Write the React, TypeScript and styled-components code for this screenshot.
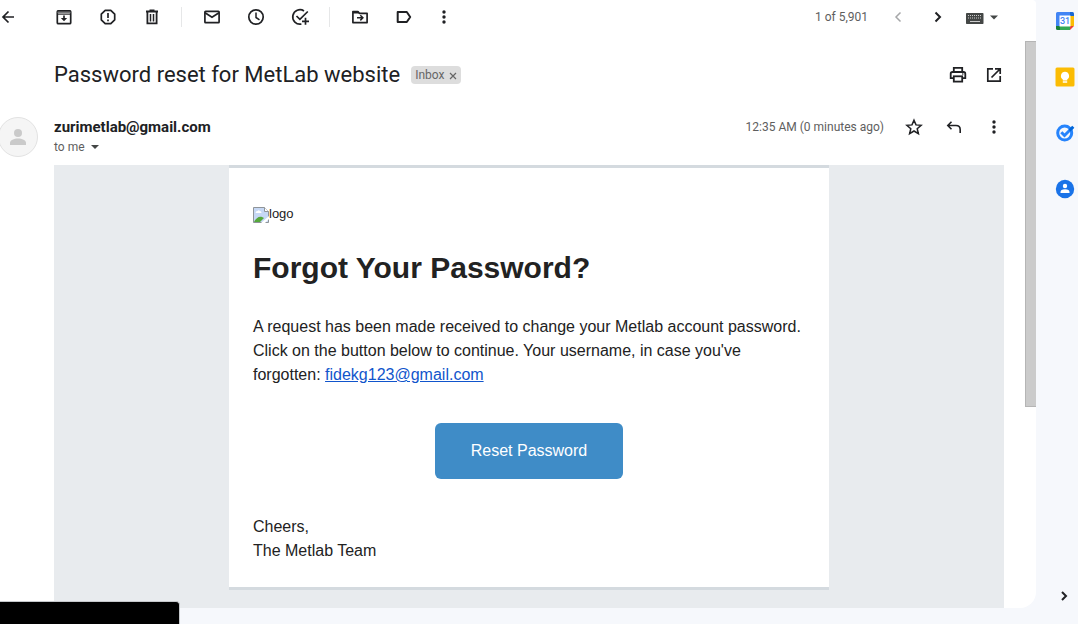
import React from "react";
import styled, { createGlobalStyle } from "styled-components";

const GlobalStyle = createGlobalStyle`
  *, *::before, *::after { box-sizing: border-box; }
  body {
    margin: 0;
    background: #f6f8fc;
    color: #202124;
    font-family: Roboto, "Liberation Sans", sans-serif;
  }
  h1, h2, p { margin: 0; }
  svg { display: block; flex: none; }
`;

const Page = styled.div`
  display: flex;
  min-height: 100vh;
`;

const Main = styled.main`
  display: flex;
  flex: 1;
  flex-direction: column;
  min-width: 0;
  margin-bottom: 16px;
  overflow: hidden;
  background: #fff;
  border-radius: 0 4px 16px 0;
`;

const Toolbar = styled.div`
  display: flex;
  align-items: center;
  height: 34px;
  margin-bottom: 7px;
  padding-right: 28px;
`;

const IconButton = styled.button<{ $width?: number; $align?: string }>`
  display: flex;
  flex: none;
  align-items: center;
  justify-content: ${(p) => p.$align ?? "center"};
  width: ${(p) => p.$width ?? 44}px;
  height: 32px;
  padding: 0;
  border: 0;
  background: none;
  color: #202124;
  cursor: pointer;
  &:disabled { color: #a6a7a9; }
`;

const Divider = styled.span`
  width: 1px;
  height: 20px;
  margin: 0 8px 0 7px;
  background: #e6e7e8;
`;

const Count = styled.span`
  margin-left: auto;
  padding-right: 10px;
  color: #5e5e5e;
  font-size: 12px;
  line-height: 16px;
`;

const Scroller = styled.div`
  display: flex;
  flex: 1;
`;

const Message = styled.article`
  display: flex;
  flex: 1;
  flex-direction: column;
  min-width: 0;
  padding-right: 21px;
`;

const Track = styled.div`
  width: 11px;
`;

const Thumb = styled.div`
  height: 366px;
  border: 1px solid #b5b5b5;
  border-width: 1px 0 1px 1px;
  background: #cbcbcb;
`;

const SubjectRow = styled.header`
  display: flex;
  align-items: center;
  height: 68px;
  padding-left: 54px;
`;

const Subject = styled.h2`
  font-size: 22px;
  font-weight: 400;
  line-height: 28px;
`;

const Chip = styled.span`
  display: flex;
  align-items: center;
  height: 18px;
  margin-left: 11px;
  padding: 0 4px;
  border-radius: 4px;
  background: #ddd;
  color: #666;
  font-size: 12px;
`;

const ChipClose = styled.button`
  display: flex;
  margin-left: 5px;
  padding: 2px 0 0;
  border: 0;
  background: none;
  color: #666;
`;

const Actions = styled.div<{ $outset: number }>`
  display: flex;
  align-items: center;
  margin-left: auto;
  margin-right: -${(p) => p.$outset}px;
`;

const SenderRow = styled.div`
  display: flex;
  height: 56px;
  padding-top: 8px;
`;

const Avatar = styled.div`
  display: flex;
  flex: none;
  align-items: center;
  justify-content: center;
  width: 40px;
  height: 40px;
  margin: 0 16px 0 -2px;
  border: 1px solid #e2e2e2;
  border-radius: 50%;
  background: #f5f5f5;
`;

const SenderInfo = styled.div`
  flex: 1;
  min-width: 0;
`;

const SenderLine = styled.div`
  display: flex;
  align-items: center;
  height: 20px;
`;

const Sender = styled.span`
  font-size: 15px;
  font-weight: 700;
`;

const Time = styled.span`
  padding-right: 10px;
  color: #5e5e5e;
  font-size: 12px;
`;

const Recipient = styled.button`
  display: flex;
  align-items: center;
  gap: 6px;
  height: 20px;
  padding: 0;
  border: 0;
  background: none;
  color: #5e5e5e;
  font: inherit;
  font-size: 12px;
`;

const MailBody = styled.div`
  flex: 1;
  margin-left: 54px;
  padding-bottom: 18px;
  background: #e8ebee;
  color: #222;
  font-family: "Liberation Sans", Arial, sans-serif;
`;

const Card = styled.section`
  max-width: 600px;
  margin: 0 auto;
  padding: 38px 24px 24px;
  border: solid #d4dadf;
  border-width: 3px 0;
  background: #fff;
  font-size: 16px;
  line-height: 24px;
`;

const BrokenLogo = styled.div`
  display: flex;
  height: 18px;
  font-size: 13px;
  line-height: 16px;
  svg { margin-top: 1px; }
`;

const Heading = styled.h1`
  margin: 20px 0 23px;
  font-size: 30px;
  font-weight: 700;
  line-height: 48px;
`;

const MailLink = styled.a`
  color: #1155cc;
`;

const ResetButton = styled.button`
  display: block;
  height: 56px;
  margin: 36px auto;
  padding: 0 36px;
  border: 0;
  border-radius: 6px;
  background: #3f8cc7;
  color: #fff;
  font: inherit;
`;

const Rail = styled.aside`
  display: flex;
  flex: none;
  flex-direction: column;
  align-items: center;
  justify-content: space-between;
  width: 42px;
  padding: 11px 0 18px 16px;
`;

const RailApps = styled.nav`
  display: flex;
  flex-direction: column;
  gap: 36px;
`;

const RailButton = styled.button`
  display: block;
  padding: 0;
  border: 0;
  background: none;
  color: #202124;
`;

const StatusBubble = styled.div`
  position: fixed;
  bottom: 0;
  left: 0;
  width: 180px;
  height: 23px;
  border: 1px solid #c5c8cb;
  border-width: 1px 1px 0 0;
  border-radius: 0 4px 0 0;
  background: #000;
`;

type IconProps = { children: React.ReactNode; size?: number; w?: number };

const Icon = ({ children, size = 20, w = 2 }: IconProps) => (
  <svg width={size} height={size} viewBox={`0 0 ${size} ${size}`} fill="none" stroke="currentColor" strokeWidth={w} aria-hidden="true">
    {children}
  </svg>
);

const Caret = () => (
  <svg width="8" height="4" viewBox="0 0 8 4" fill="#444746" aria-hidden="true">
    <path d="M0 0h8L4 4z" />
  </svg>
);

const MoreIcon = () => (
  <Icon>
    <g fill="currentColor" stroke="none">
      <circle cx="10" cy="5" r="1.7" />
      <circle cx="10" cy="10" r="1.7" />
      <circle cx="10" cy="15" r="1.7" />
    </g>
  </Icon>
);

export default function App() {
  return (
    <Page>
      <GlobalStyle />
      <Main>
        <Toolbar role="toolbar">
          <IconButton $width={42} $align="flex-start" aria-label="Back">
            <Icon size={16} w={1.7}><path d="M14 8H3M8.500 2.500 3 8l5.500 5.500" /></Icon>
          </IconButton>
          <IconButton aria-label="Archive">
            <Icon w={1.7}>
              <rect x="3.300" y="3.800" width="13.400" height="12.900" rx="1" />
              <path d="M3.500 5.500h13" stroke="#77787a" />
              <path d="M3.500 3.800h13M3.500 7.200h13" strokeWidth="1" />
              <path d="M10 8.500v4" />
              <path d="M6.800 11h6.400L10 14.200z" fill="currentColor" stroke="none" />
            </Icon>
          </IconButton>
          <IconButton aria-label="Report spam">
            <Icon w={1.7}>
              <path d="M7.200 3.300h5.600l3.900 3.900v5.600l-3.900 3.900H7.200l-3.900-3.900V7.200z" strokeLinejoin="round" />
              <path d="M10 6v5M10 12.500v1.700" />
            </Icon>
          </IconButton>
          <IconButton aria-label="Delete">
            <Icon w={1.8}>
              <path d="M4 4.500h12M7.500 3.500h5M5.400 5v11.300h9.200V5" />
              <path d="M8.500 7v7.500M11.500 7v7.500" strokeWidth="1.500" />
            </Icon>
          </IconButton>
          <Divider />
          <IconButton aria-label="Mark as unread">
            <Icon w={1.7}>
              <rect x="2.900" y="4.400" width="14.200" height="11.200" rx=".7" />
              <path d="m3 5.700 7 4.500 7-4.500" />
            </Icon>
          </IconButton>
          <IconButton aria-label="Snooze">
            <Icon w={1.7}>
              <circle cx="10" cy="10" r="7.200" />
              <path d="M10 5.500v5l3.500 2.300" strokeWidth="1.500" />
            </Icon>
          </IconButton>
          <IconButton aria-label="Add to Tasks">
            <Icon w={1.7}>
              <path d="M14 4a7.200 7.200 0 1 0-2.600 13M6.500 9l3.400 3.400L17.800 4.500M15.500 10.800v6.900M12 14.300h7" />
            </Icon>
          </IconButton>
          <Divider />
          <IconButton aria-label="Move to">
            <Icon w={1.7}>
              <path d="M2.900 4.500h5l1.500 1.800h7.700v9.300H2.900z" strokeLinejoin="round" />
              <path d="M3 4h5l1.700 2.500H3z" fill="currentColor" stroke="none" />
              <path d="M7 10.800h5M10.300 8.200l2.600 2.600-2.600 2.600" strokeWidth="1.500" />
            </Icon>
          </IconButton>
          <IconButton aria-label="Labels">
            <Icon w={2}><path d="M3.700 5h9.100l3.400 5-3.400 5H3.700z" strokeLinejoin="round" /></Icon>
          </IconButton>
          <IconButton $width={36} aria-label="More"><MoreIcon /></IconButton>
          <Count>1 of 5,901</Count>
          <IconButton $width={40} aria-label="Newer" disabled>
            <Icon w={1.5}><path d="M12.500 5.500 8 10l4.500 4.500" /></Icon>
          </IconButton>
          <IconButton $width={40} aria-label="Older">
            <Icon w={2}><path d="M7.500 5.500 12 10l-4.500 4.500" /></Icon>
          </IconButton>
          <IconButton $width={50} aria-label="Input tools">
            <svg width="34" height="20" viewBox="0 0 34 20" fill="#444746" aria-hidden="true">
              <rect y="6" width="17.500" height="11" rx=".7" />
              <path d="M2 8.500h14M2 11h14" stroke="#ccc" strokeDasharray="1 1" />
              <path d="M4 14.500h10" stroke="#ccc" />
              <path d="M24 8.500h8l-4 4z" />
            </svg>
          </IconButton>
        </Toolbar>
        <Scroller>
          <Message>
            <SubjectRow>
              <Subject>Password reset for MetLab website</Subject>
              <Chip>
                Inbox
                <ChipClose aria-label="Remove label Inbox">
                  <Icon size={8} w={1.2}><path d="m1 1 6 6M7 1 1 7" /></Icon>
                </ChipClose>
              </Chip>
              <Actions $outset={8}>
                <IconButton $width={36} aria-label="Print all">
                  <Icon w={1.8}>
                    <path d="M5.800 6.500V2.900h8.400v3.600M5.500 13.200H2.700V8.800q0-1.800 1.800-1.800h11q1.800 0 1.800 1.800v4.400h-2.800" />
                    <rect x="5.800" y="11.300" width="8.400" height="5.300" />
                    <circle cx="14.800" cy="9" r=".8" fill="currentColor" stroke="none" />
                  </Icon>
                </IconButton>
                <IconButton $width={36} aria-label="In new window">
                  <Icon w={1.7}><path d="M9 3.800H3.800v12.400h12.400V11M11 3.800h5.200V9M16 4l-8.500 8.500" /></Icon>
                </IconButton>
              </Actions>
            </SubjectRow>
            <SenderRow>
              <Avatar>
                <svg width="16" height="18" viewBox="0 0 16 18" fill="#cacaca" aria-hidden="true">
                  <circle cx="8" cy="5" r="4" />
                  <path d="M0 17v-2c0-3 4-4.500 8-4.500s8 1.500 8 4.500v2z" />
                </svg>
              </Avatar>
              <SenderInfo>
                <SenderLine>
                  <Sender>zurimetlab@gmail.com</Sender>
                  <Actions $outset={10}>
                    <Time>12:35 AM (0 minutes ago)</Time>
                    <IconButton $width={40} aria-label="Star">
                      <Icon w={1.5}><path d="m10 3.200 2 4.700 5.100.4-3.900 3.400 1.200 5-4.400-2.700-4.400 2.700 1.200-5-3.900-3.400 5.100-.4z" /></Icon>
                    </IconButton>
                    <IconButton $width={40} aria-label="Reply">
                      <Icon w={1.6}><path d="M7.500 4.800 3.800 8.500l3.700 3.700M4 8.500h8q4.200 0 4.200 4.200V16" /></Icon>
                    </IconButton>
                    <IconButton $width={40} aria-label="More message options"><MoreIcon /></IconButton>
                  </Actions>
                </SenderLine>
                <Recipient aria-label="Show details">to me <Caret /></Recipient>
              </SenderInfo>
            </SenderRow>
            <MailBody>
              <Card>
                <BrokenLogo>
                  <svg width="16" height="16" viewBox="0 0 16 16" aria-hidden="true">
                    <path d="M.5.500h11l4 4v11H.5z" fill="#c6d8f5" stroke="#8f9499" />
                    <path d="M11.500.500v4h4" fill="#fff" stroke="#8f9499" />
                    <path d="M2.500 6q0-2 2-2 1-1.500 2.500 0 1.500 0 1.500 2z" fill="#fff" />
                    <path d="M1 15c2-4 5-6 8-5l2 1-4 4z" fill="#55a83b" />
                    <path d="m8 16 8-7v3l-4 4z" fill="#fff" />
                  </svg>
                  <span>logo</span>
                </BrokenLogo>
                <Heading>Forgot Your Password?</Heading>
                <p>
                  A request has been made received to change your Metlab account password. Click on the button below to
                  continue. Your username, in case you've forgotten:{" "}
                  <MailLink href="mailto:fidekg123@gmail.com">fidekg123@gmail.com</MailLink>
                </p>
                <ResetButton>Reset Password</ResetButton>
                <p>
                  Cheers,
                  <br />
                  The Metlab Team
                </p>
              </Card>
            </MailBody>
          </Message>
          <Track><Thumb /></Track>
        </Scroller>
      </Main>
      <Rail>
        <RailApps>
          <RailButton aria-label="Calendar">
            <svg width="20" height="20" viewBox="0 0 20 20" aria-hidden="true">
              <path d="M2.500 1H15v4H5v10H1V2.500Q1 1 2.500 1z" fill="#4285f4" />
              <path d="M15 1h2.500Q19 1 19 2.500V5h-4z" fill="#1967d2" />
              <path d="M15 5h4v10h-4z" fill="#fbbc04" />
              <path d="M5 15h10v4H5z" fill="#34a853" />
              <path d="M1 15h4v4H2.500Q1 19 1 17.500z" fill="#188038" />
              <path d="M15 15h4l-4 4z" fill="#ea4335" />
              <path d="M4.500 4.500h11v11h-11z" fill="#fff" />
              <text x="10" y="13" textAnchor="middle" fill="#4285f4" fontSize="9" fontWeight="500" fontFamily="Roboto, sans-serif">31</text>
            </svg>
          </RailButton>
          <RailButton aria-label="Keep">
            <svg width="20" height="20" viewBox="0 0 20 20" aria-hidden="true">
              <rect x=".5" y=".5" width="19" height="19" rx="1.500" fill="#fbbc04" />
              <path d="M10 4.800a4.200 4.200 0 0 0-2.200 7.700V13.500h4.400v-1A4.200 4.200 0 0 0 10 4.800zM7.800 14.300h4.400v1.400H7.800z" fill="#fff" />
            </svg>
          </RailButton>
          <RailButton aria-label="Tasks">
            <svg width="20" height="20" viewBox="0 0 20 20" fill="none" aria-hidden="true">
              <circle cx="9.700" cy="10" r="7" stroke="#2684fc" strokeWidth="3" />
              <path d="m6.300 9.300 3.200 3.200L17.500 4.500" stroke="#2684fc" strokeWidth="3" />
              <path d="m13.500 6.500 3.800-3.800 2 2-3.800 3.800z" fill="#0066da" />
            </svg>
          </RailButton>
          <RailButton aria-label="Contacts">
            <svg width="20" height="20" viewBox="0 0 20 20" aria-hidden="true">
              <circle cx="10" cy="10" r="9.200" fill="#1a73e8" />
              <circle cx="10" cy="7" r="2.200" fill="#fff" />
              <path d="M5.500 14v-1q0-2.700 4.500-2.700t4.500 2.700v1z" fill="#fff" />
            </svg>
          </RailButton>
        </RailApps>
        <RailButton aria-label="Hide side panel">
          <Icon w={2}><path d="M7 6l4 4-4 4" /></Icon>
        </RailButton>
      </Rail>
      <StatusBubble />
    </Page>
  );
}
